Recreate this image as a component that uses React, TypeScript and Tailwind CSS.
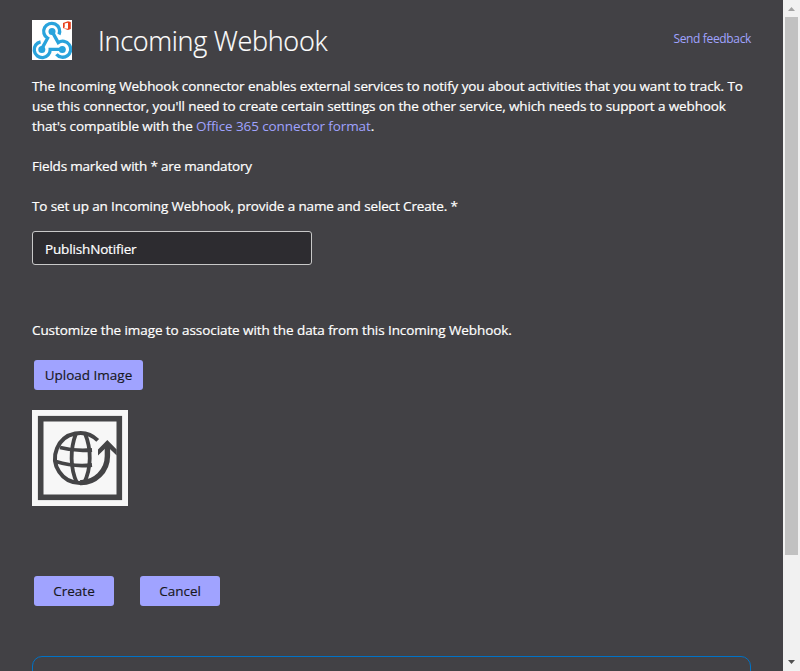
function WebhookLogo() {
  return (
    <svg className="block size-10 shrink-0 bg-white" viewBox="0 0 40 40" fill="none">
      <g stroke="#29a3dc" strokeWidth="3.3" fill="none">
        <path d="M27 14.5A8 8 0 1 0 15.6 18.2L10.4 27.6" />
        <path d="M20 11.4L26.2 22.6A8 8 0 1 1 24.4 34.2" />
        <path d="M30.3 29.4H18.2A8 8 0 1 1 8.6 21.8" />
      </g>
      <circle cx="20" cy="11.4" r="3.5" fill="#29a3dc" />
      <circle cx="9.8" cy="29.4" r="3.5" fill="#29a3dc" />
      <circle cx="30.3" cy="29.4" r="3.5" fill="#29a3dc" />
      <path fill="#e8401c" fillRule="evenodd" d="M31 3L36 1.3L38.8 2V9L36 10L31 8.2L36 8.7V2.7L32.7 3.6V7.4L31 8.2Z" />
    </svg>
  );
}

function ConnectorImage() {
  return (
    <svg className="block size-24 bg-[#f7f7f7]" viewBox="0 0 96 96" fill="none" stroke="#444446">
      <rect x="8.7" y="8.7" width="78.6" height="78.6" strokeWidth="5.6" />
      <path d="M65.7 30.3A25 25 0 1 0 48 73" strokeWidth="4" />
      <path d="M48 72.6A26.5 26.5 0 0 0 75.4 46V36" strokeWidth="5.4" />
      <path d="M44 23.5C38 39 38 58 45 73M53 23.5C59.5 39 59.5 58 52 73" strokeWidth="3.8" />
      <path d="M28 37.5Q43 41.5 60 40M24 51.5Q41 57 60 55" strokeWidth="3.8" />
      <path d="M66 45.5V39.5L75.3 30L84.7 39.5V45.5L75.3 36.5Z" fill="#444446" stroke="none" />
    </svg>
  );
}

const button =
  "h-[30px] rounded-[3px] bg-[#a0a3ff] text-[13.5px] leading-[30px] font-medium text-[#18181c] text-center [-webkit-text-stroke:0.15px]";

export default function App() {
  return (
    <div className="flex h-[671px] w-[800px] overflow-hidden bg-[#424145] font-['Open_Sans','Noto_Sans',sans-serif] text-[13.5px] leading-5 text-white">
      <main className="h-full w-[783px] overflow-hidden pl-8 pr-8 pt-5 [-webkit-text-stroke:0.2px]">
        <header className="flex h-10 items-start">
          <WebhookLogo />
          <h1 className="ml-[26px] mt-px flex-1 whitespace-nowrap text-[27px] leading-10 font-light tracking-[-0.3px]">Incoming Webhook</h1>
          <a className="mt-[9px] whitespace-nowrap text-[12px] leading-5 tracking-[-0.35px] text-[#a0a3ff] [-webkit-text-stroke:0]">Send feedback</a>
        </header>
        <p className="mt-4 whitespace-nowrap">
          <span className="block tracking-[-0.1px]">The Incoming Webhook connector enables external services to notify you about activities that you want to track. To</span>
          <span className="block tracking-[-0.115px]">use this connector, you'll need to create certain settings on the other service, which needs to support a webhook</span>
          <span className="block tracking-[-0.1px]">that's compatible with the <a className="text-[#a0a3ff] [-webkit-text-stroke:0]">Office 365 connector format</a>.</span>
        </p>
        <p className="mt-5 tracking-[-0.19px]">Fields marked with * are mandatory</p>
        <p className="mt-5 tracking-[-0.13px]">To set up an Incoming Webhook, provide a name and select Create. *</p>
        <input
          className="mt-[15px] block h-[34px] w-[280px] rounded-[3px] border border-[#c8c8c8] bg-[#2d2c30] px-3 pt-0.5 text-[13.5px] tracking-[-0.15px] text-white outline-none"
          defaultValue="PublishNotifier"
        />
        <p className="mt-[55px] tracking-[-0.08px]">Customize the image to associate with the data from this Incoming Webhook.</p>
        <button className={`${button} ml-0.5 mt-5 block w-[109px]`}>Upload Image</button>
        <div className="mt-5"><ConnectorImage /></div>
        <div className="ml-0.5 mt-[70px] flex gap-[26px]">
          <button className={`${button} w-20`}>Create</button>
          <button className={`${button} w-20`}>Cancel</button>
        </div>
        <section className="mt-[50px] h-20 w-[719px] rounded-[10px] border border-[#0072c6]" />
      </main>
      <aside className="flex h-full w-[17px] flex-col items-center bg-[#f1f1f1]">
        <svg className="h-[17px] w-[17px] shrink-0" viewBox="0 0 17 17"><path d="M5 11H12L8.5 7Z" fill="#a3a3a3" /></svg>
        <div className="h-[538px] w-[13px] bg-[#c1c1c1]" />
        <svg className="mt-auto h-[17px] w-[17px] shrink-0" viewBox="0 0 17 17"><path d="M5 6H12L8.5 10Z" fill="#505050" /></svg>
      </aside>
    </div>
  );
}
